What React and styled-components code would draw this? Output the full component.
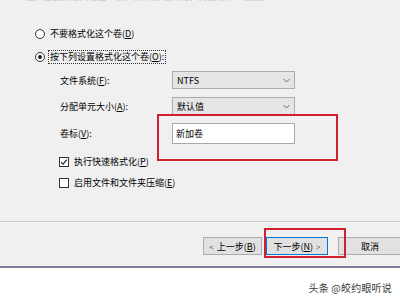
import React from 'react';
import styled, { createGlobalStyle } from 'styled-components';

const GlobalStyle = createGlobalStyle`
  html, body {
    margin: 0;
    padding: 0;
    background: #ffffff;
  }
  body {
    font-family: "Noto Sans CJK SC", "Liberation Sans", sans-serif;
    -webkit-font-smoothing: antialiased;
  }
`;

const Page = styled.div`
  width: 400px;
  height: 300px;
  overflow: hidden;
  display: flex;
  flex-direction: column;
`;

const Dialog = styled.div`
  position: relative;
  box-sizing: border-box;
  height: 268px;
  background: #f0f0f0;
  border-bottom: 2px solid #7b7e94;
  display: flex;
  flex-direction: column;
`;

const HeaderClip = styled.div`
  height: 4px;
  overflow: hidden;
  padding-left: 25px;
`;

const HeaderText = styled.div`
  margin-top: -9px;
  font-size: 9px;
  line-height: 12px;
  color: #c9c9c9;
  white-space: nowrap;
`;

const Content = styled.div`
  padding: 23px 0 0 35px;
  display: flex;
  flex-direction: column;
  font-size: 9px;
  color: #000;
`;

const OptionRow = styled.div`
  display: flex;
  align-items: center;
  gap: 3px;
  height: 14px;
  margin-top: ${(p) => p.$top || 0}px;
  margin-left: ${(p) => p.$indent || 0}px;
`;

const Radio = styled.span`
  box-sizing: border-box;
  width: 10px;
  height: 10px;
  border-radius: 50%;
  border: 1px solid #333;
  background: #fff;
  display: flex;
  align-items: center;
  justify-content: center;
  &::after {
    content: '';
    width: 4px;
    height: 4px;
    border-radius: 50%;
    background: ${(p) => (p.$checked ? '#222' : 'transparent')};
  }
`;

const OptionLabel = styled.span`
  line-height: 12px;
  white-space: nowrap;
  padding: 0 1px;
  border: 1px dotted ${(p) => (p.$focused ? '#333' : 'transparent')};
`;

const Key = styled.u`
  text-decoration: underline;
`;

const FormGrid = styled.div`
  margin: 7px 0 0 25px;
  display: grid;
  grid-template-columns: 112px 123px;
  grid-auto-rows: auto;
  row-gap: 8px;
  align-items: center;
`;

const FieldLabel = styled.span`
  white-space: nowrap;
`;

const Select = styled.div`
  box-sizing: border-box;
  height: 18px;
  background: #e5e5e5;
  border: 1px solid #adadad;
  display: flex;
  align-items: center;
  justify-content: space-between;
  padding: 0 4px;
`;

const TextBox = styled.div`
  box-sizing: border-box;
  height: 21px;
  background: #fff;
  border: 1px solid #a9a9a9;
  display: flex;
  align-items: center;
  padding: 0 3px;
`;

const Checkbox = styled.span`
  box-sizing: border-box;
  width: 10px;
  height: 10px;
  border: 1px solid #333;
  background: #fff;
  display: flex;
  align-items: center;
  justify-content: center;
`;

const Footer = styled.div`
  margin-top: auto;
  height: 45px;
  box-sizing: border-box;
  border-top: 1px solid #cacaca;
  box-shadow: inset 0 1px 0 #f8f8f8;
  padding: 15px 0 0 203px;
  display: flex;
  align-items: flex-start;
  overflow: hidden;
`;

const Button = styled.div`
  flex: none;
  box-sizing: border-box;
  width: ${(p) => p.$width}px;
  height: 18px;
  margin-left: ${(p) => p.$gap || 0}px;
  background: #e1e1e1;
  border: ${(p) => (p.$default ? '1px solid #0078d7' : '1px solid #adadad')};
  display: flex;
  align-items: center;
  justify-content: center;
  gap: 3px;
  font-size: 9px;
  color: #000;
  white-space: nowrap;
`;

const Arrow = styled.span`
  font-size: 8px;
  color: #555;
`;

const Highlight = styled.div`
  position: absolute;
  box-sizing: border-box;
  border: 2px solid #d21f30;
  left: ${(p) => p.$x}px;
  top: ${(p) => p.$y}px;
  width: ${(p) => p.$w}px;
  height: ${(p) => p.$h}px;
  pointer-events: none;
`;

const Watermark = styled.div`
  flex: 1;
  display: flex;
  justify-content: flex-end;
  align-items: center;
  padding: 6px 8px 0 0;
  font-size: 10px;
  color: #3a3a3a;
  letter-spacing: 0.2px;
`;

const Chevron = () => (
  <svg width="7" height="5" viewBox="0 0 7 5">
    <path d="M0.5 1 L3.5 4 L6.5 1" fill="none" stroke="#6b6b6b" strokeWidth="1" />
  </svg>
);

const Tick = () => (
  <svg width="8" height="8" viewBox="0 0 8 8">
    <path d="M1 4.2 L3 6.2 L7 1.6" fill="none" stroke="#222" strokeWidth="1.1" />
  </svg>
);

const App = () => (
  <Page>
    <GlobalStyle />
    <Dialog>
      <HeaderClip>
        <HeaderText>选择是否要格式化这个卷，如果要 格式化，要使用什么设置。</HeaderText>
      </HeaderClip>

      <Content>
        <OptionRow>
          <Radio />
          <OptionLabel>不要格式化这个卷(<Key>D</Key>)</OptionLabel>
        </OptionRow>
        <OptionRow $top={9}>
          <Radio $checked />
          <OptionLabel $focused>按下列设置格式化这个卷(<Key>O</Key>):</OptionLabel>
        </OptionRow>

        <FormGrid>
          <FieldLabel>文件系统(<Key>F</Key>):</FieldLabel>
          <Select>
            <span>NTFS</span>
            <Chevron />
          </Select>
          <FieldLabel>分配单元大小(<Key>A</Key>):</FieldLabel>
          <Select>
            <span>默认值</span>
            <Chevron />
          </Select>
          <FieldLabel>卷标(<Key>V</Key>):</FieldLabel>
          <TextBox>新加卷</TextBox>
        </FormGrid>

        <OptionRow $top={11} $indent={24}>
          <Checkbox>
            <Tick />
          </Checkbox>
          <OptionLabel>执行快速格式化(<Key>P</Key>)</OptionLabel>
        </OptionRow>
        <OptionRow $top={7} $indent={24}>
          <Checkbox />
          <OptionLabel>启用文件和文件夹压缩(<Key>E</Key>)</OptionLabel>
        </OptionRow>
      </Content>

      <Footer>
        <Button $width={59}>
          <Arrow>&lt;</Arrow>
          <span>上一步(<Key>B</Key>)</span>
        </Button>
        <Button $width={62} $gap={4} $default>
          <span>下一步(<Key>N</Key>)</span>
          <Arrow>&gt;</Arrow>
        </Button>
        <Button $width={64} $gap={10}>
          取消
        </Button>
      </Footer>

      <Highlight $x={157} $y={114} $w={181} $h={47} />
      <Highlight $x={264} $y={228} $w={82} $h={30} />
    </Dialog>
    <Watermark>头条 @皎约眼听说</Watermark>
  </Page>
);

export default App;
